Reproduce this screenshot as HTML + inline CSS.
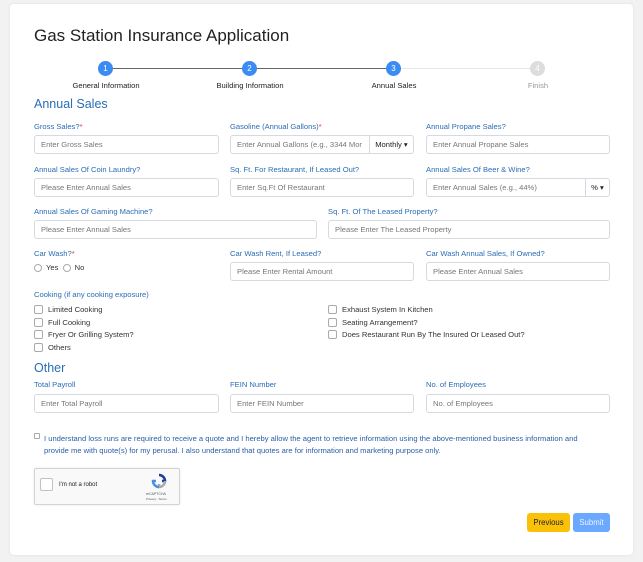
<!DOCTYPE html>
<html><head><meta charset="utf-8"><style>
*{box-sizing:border-box;margin:0;padding:0}
body{width:643px;height:562px;background:#f2f2f3;font-family:"Liberation Sans",Arial,sans-serif;position:relative;overflow:hidden}
.card{position:absolute;left:10px;top:4px;width:623px;height:551px;background:#fff;border-radius:4px;box-shadow:0 0 3px rgba(0,0,0,.08)}
.a{position:absolute;white-space:nowrap}
.t{left:34px;top:26px;font-size:17px;color:#222}
.c{width:15px;height:15px;border-radius:50%;background:#3b8cf2;color:#fff;font-size:8px;text-align:center;line-height:15px;top:61px}
.c.g{background:#ddd}
.ln{height:1px;top:68px;background:#666}
.sl{font-size:7.6px;color:#222;top:81px;text-align:center;width:100px}
.h{font-size:12.5px;color:#2a6db5;left:34px}
.l{font-size:7.6px;color:#2a6db5}
.l b{color:#e33;font-weight:normal}
.i{height:19px;border:1px solid #d5d9e0;border-radius:3px;font-size:7.6px;color:#777;padding-left:6px;line-height:17px;overflow:hidden}
.ad{height:19px;border:1px solid #d5d9e0;border-radius:0 3px 3px 0;font-size:7.6px;color:#222;line-height:17px;text-align:center;background:#fff}
.cb{font-size:7.6px;color:#333}
.cb:before{content:"";display:inline-block;width:7px;height:7px;border:1px solid #aaa;border-radius:2px;vertical-align:-2px;margin-right:5px}
.r{display:inline-block;width:8px;height:8px;border:1px solid #aaa;border-radius:50%;vertical-align:-2px;margin-right:4px}
.btn{height:19px;border-radius:3px;font-size:7.8px;line-height:19px;text-align:center}
</style></head><body>
<div class="card"></div>
<div class="a t">Gas Station Insurance Application</div>
<div class="a ln" style="left:113px;width:130px"></div>
<div class="a ln" style="left:257px;width:130px"></div>
<div class="a ln" style="left:401px;width:130px;background:#e6e6e6"></div>
<div class="a c" style="left:98px">1</div>
<div class="a c" style="left:242px">2</div>
<div class="a c" style="left:386px">3</div>
<div class="a c g" style="left:530px">4</div>
<div class="a sl" style="left:56px">General Information</div>
<div class="a sl" style="left:200px">Building Information</div>
<div class="a sl" style="left:344px">Annual Sales</div>
<div class="a sl" style="left:488px;color:#999">Finish</div>

<div class="a h" style="top:97px">Annual Sales</div>
<div class="a l" style="left:34px;top:122px">Gross Sales?<b>*</b></div>
<div class="a l" style="left:230px;top:122px">Gasoline (Annual Gallons)<b>*</b></div>
<div class="a l" style="left:426px;top:122px">Annual Propane Sales?</div>
<div class="a i" style="left:34px;top:135px;width:185px">Enter Gross Sales</div>
<div class="a i" style="left:230px;top:135px;width:146px;border-radius:3px 0 0 3px">Enter Annual Gallons (e.g., 3344 Mor</div>
<div class="a ad" style="left:369px;top:135px;width:45px">Monthly ▾</div>
<div class="a i" style="left:426px;top:135px;width:184px">Enter Annual Propane Sales</div>

<div class="a l" style="left:34px;top:165px">Annual Sales Of Coin Laundry?</div>
<div class="a l" style="left:230px;top:165px">Sq. Ft. For Restaurant, If Leased Out?</div>
<div class="a l" style="left:426px;top:165px">Annual Sales Of Beer &amp; Wine?</div>
<div class="a i" style="left:34px;top:178px;width:185px">Please Enter Annual Sales</div>
<div class="a i" style="left:230px;top:178px;width:184px">Enter Sq.Ft Of Restaurant</div>
<div class="a i" style="left:426px;top:178px;width:160px;border-radius:3px 0 0 3px">Enter Annual Sales (e.g., 44%)</div>
<div class="a ad" style="left:585px;top:178px;width:25px">% ▾</div>

<div class="a l" style="left:34px;top:207px">Annual Sales Of Gaming Machine?</div>
<div class="a l" style="left:328px;top:207px">Sq. Ft. Of The Leased Property?</div>
<div class="a i" style="left:34px;top:220px;width:283px">Please Enter Annual Sales</div>
<div class="a i" style="left:328px;top:220px;width:282px">Please Enter The Leased Property</div>

<div class="a l" style="left:34px;top:249px">Car Wash?<b>*</b></div>
<div class="a l" style="left:230px;top:249px">Car Wash Rent, If Leased?</div>
<div class="a l" style="left:426px;top:249px">Car Wash Annual Sales, If Owned?</div>
<div class="a cb" style="left:34px;top:263px;color:#333;font-size:7.6px"><span class="r"></span>Yes &nbsp;<span class="r"></span>No</div>
<style>.cb:has(.r):before{display:none}</style>
<div class="a i" style="left:230px;top:262px;width:184px">Please Enter Rental Amount</div>
<div class="a i" style="left:426px;top:262px;width:184px">Please Enter Annual Sales</div>

<div class="a l" style="left:34px;top:290px">Cooking (if any cooking exposure)</div>
<div class="a cb" style="left:34px;top:305px">Limited Cooking</div>
<div class="a cb" style="left:34px;top:318px">Full Cooking</div>
<div class="a cb" style="left:34px;top:330px">Fryer Or Grilling System?</div>
<div class="a cb" style="left:34px;top:343px">Others</div>
<div class="a cb" style="left:328px;top:305px">Exhaust System In Kitchen</div>
<div class="a cb" style="left:328px;top:318px">Seating Arrangement?</div>
<div class="a cb" style="left:328px;top:330px">Does Restaurant Run By The Insured Or Leased Out?</div>

<div class="a h" style="top:361px">Other</div>
<div class="a l" style="left:34px;top:380px">Total Payroll</div>
<div class="a l" style="left:230px;top:380px">FEIN Number</div>
<div class="a l" style="left:426px;top:380px">No. of Employees</div>
<div class="a i" style="left:34px;top:394px;width:185px">Enter Total Payroll</div>
<div class="a i" style="left:230px;top:394px;width:184px">Enter FEIN Number</div>
<div class="a i" style="left:426px;top:394px;width:184px">No. of Employees</div>

<div class="a" style="left:34px;top:433px;width:6px;height:6px;border:1px solid #aaa;border-radius:1px"></div>
<div class="a l" style="left:44px;top:433px;line-height:12px;white-space:normal;width:560px;color:#2a5ea8">I understand loss runs are required to receive a quote and I hereby allow the agent to retrieve information using the above-mentioned business information and provide me with quote(s) for my perusal. I also understand that quotes are for information and marketing purpose only.</div>

<div class="a" style="left:34px;top:468px;width:146px;height:37px;border:1px solid #d3d3d3;border-radius:2px;background:#f9f9f9;box-shadow:0 0 2px rgba(0,0,0,.1)"></div>
<div class="a" style="left:40px;top:478px;width:13px;height:13px;border:1px solid #c1c1c1;border-radius:2px;background:#fff"></div>
<div class="a" style="left:59px;top:482px;font-size:6px;color:#222">I'm not a robot</div>
<svg class="a" style="left:151px;top:473px" width="16" height="16" viewBox="0 0 16 16"><path d="M8 2a6 6 0 0 1 6 6h-3l0 0" fill="none" stroke="#1c3aa9" stroke-width="2.5"/><path d="M14 8a6 6 0 0 1-6 6v-3" fill="none" stroke="#aaa" stroke-width="2.5"/><path d="M8 14a6 6 0 0 1-6-6h3" fill="none" stroke="#4a90e2" stroke-width="2.5"/></svg>
<div class="a" style="left:146px;top:492px;font-size:3.5px;color:#555">reCAPTCHA</div>
<div class="a" style="left:146px;top:497px;font-size:3px;color:#555">Privacy - Terms</div>

<div class="a btn" style="left:527px;top:513px;width:43px;background:#fbc108;color:#222">Previous</div>
<div class="a btn" style="left:573px;top:513px;width:37px;background:#6aa9ff;color:#eaf2ff">Submit</div>
</body></html>
